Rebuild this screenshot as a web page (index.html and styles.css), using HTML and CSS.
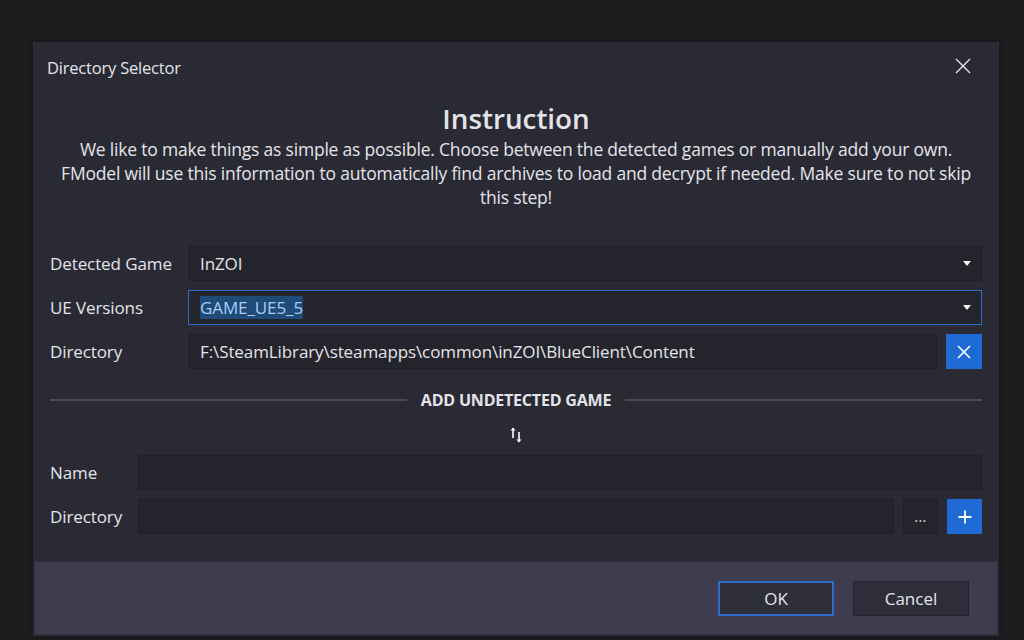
FILE: index.html
```html
<!DOCTYPE html>
<html lang="en">
<head>
  <meta charset="UTF-8" />
  <title>Directory Selector</title>
  <link rel="stylesheet" href="styles.css">
</head>
<body>
  <div class="window">
    <div class="titlebar">
      <span class="title">Directory Selector</span>
      <button class="close" aria-label="Close">
        <svg width="16" height="16" viewBox="0 0 16 16"><path d="M1 1 L15 15 M15 1 L1 15" stroke="#e6e6e6" stroke-width="1.4" fill="none"/></svg>
      </button>
    </div>

    <div class="content">
      <h1>Instruction</h1>
      <p class="intro">We like to make things as simple as possible. Choose between the detected games or manually add your own. FModel will use this information to automatically find archives to load and decrypt if needed. Make sure to not skip this step!</p>

      <div class="form top">
        <label>Detected Game</label>
        <div class="combo">
          <span>InZOI</span>
          <span class="caret"></span>
        </div>

        <label>UE Versions</label>
        <div class="combo focused">
          <span class="selected">GAME_UE5_5</span>
          <span class="caret"></span>
        </div>

        <label>Directory</label>
        <div class="field-row">
          <div class="field">F:\SteamLibrary\steamapps\common\inZOI\BlueClient\Content</div>
          <button class="icon-btn blue">
            <svg width="14" height="14" viewBox="0 0 14 14"><path d="M1 1 L13 13 M13 1 L1 13" stroke="#fff" stroke-width="1.6" fill="none"/></svg>
          </button>
        </div>
      </div>

      <div class="separator">
        <span class="line"></span>
        <span class="sep-text">ADD UNDETECTED GAME</span>
        <span class="line"></span>
      </div>

      <div class="swap">
        <svg width="14" height="18" viewBox="0 0 14 18">
          <path d="M4 2 L4 12" stroke="#fff" stroke-width="1.6"/>
          <path d="M1.5 4.5 L4 1.5 L6.5 4.5 Z" fill="#fff"/>
          <path d="M10 6 L10 16" stroke="#fff" stroke-width="1.6"/>
          <path d="M7.5 13.5 L10 16.5 L12.5 13.5 Z" fill="#fff"/>
        </svg>
      </div>

      <div class="form bottom">
        <label>Name</label>
        <div class="field"></div>

        <label>Directory</label>
        <div class="field-row">
          <div class="field"></div>
          <button class="icon-btn dots">...</button>
          <button class="icon-btn blue">
            <svg width="14" height="14" viewBox="0 0 14 14"><path d="M7 0.5 L7 13.5 M0.5 7 L13.5 7" stroke="#fff" stroke-width="1.8" fill="none"/></svg>
          </button>
        </div>
      </div>
    </div>

    <div class="footer">
      <button class="btn primary">OK</button>
      <button class="btn">Cancel</button>
    </div>
  </div>
</body>
</html>
```

FILE: styles.css
```css
* {
  box-sizing: border-box;
}

body {
  margin: 0;
  height: 640px;
  overflow: hidden;
  background: #1d1d1f;
  font-family: 'Open Sans', 'Noto Sans', sans-serif;
  color: #e4e4e8;
}

button {
  font-family: inherit;
  color: inherit;
}

.window {
  margin: 42px 0 0 33px;
  width: 966px;
  height: 594px;
  background: #2a2a35;
  border: 2px solid #2d2d37;
  border-top: 0;
  display: flex;
  flex-direction: column;
  box-shadow: 0 0 6px rgba(0, 0, 0, 0.4);
}

.titlebar {
  height: 50px;
  display: flex;
  align-items: center;
  justify-content: space-between;
  padding: 0 26px 0 12px;
}

.title {
  font-size: 16.5px;
  letter-spacing: -0.2px;
}

.close {
  background: none;
  border: none;
  padding: 0;
  width: 16px;
  height: 16px;
  display: flex;
  margin-top: -2px;
}

.content {
  flex: 1;
  padding: 0 15px;
}

h1 {
  margin: 7px 0 0;
  text-align: center;
  font-size: 27.8px;
  font-weight: 600;
  line-height: 38px;
}

.intro {
  margin: 0;
  padding: 0;
  text-align: center;
  font-size: 17.5px;
  line-height: 24px;
  letter-spacing: -0.2px;
}

.form {
  display: grid;
  align-items: center;
  row-gap: 9px;
}

.form.top {
  grid-template-columns: 138px 1fr;
  margin-top: 37px;
  row-gap: 9px;
}

.form.bottom {
  grid-template-columns: 88px 1fr;
  margin-top: 11px;
}

label {
  font-size: 17px;
  letter-spacing: -0.1px;
}

.combo, .field {
  height: 35px;
  background: #24242d;
  border: 1px solid #202028;
  display: flex;
  align-items: center;
  justify-content: space-between;
  padding: 0 11px;
  font-size: 17px;
  letter-spacing: -0.1px;
}

.combo.focused {
  border-color: #2e6ccc;
}

.selected {
  background: #1f4b79;
  color: #a9cdf3;
}

.caret {
  width: 0;
  height: 0;
  border-left: 4.5px solid transparent;
  border-right: 4.5px solid transparent;
  border-top: 5px solid #f2f2f2;
  margin-right: -1px;
}

.field-row {
  display: flex;
  gap: 9px;
}

.field-row .field {
  flex: 1;
}

.icon-btn {
  width: 36px;
  height: 35px;
  border: none;
  padding: 0;
  display: flex;
  align-items: center;
  justify-content: center;
  flex-shrink: 0;
}

.form.bottom .icon-btn {
  width: 35px;
}

.icon-btn.blue {
  background: #1f6ad4;
}

.icon-btn.dots {
  background: #24242d;
  border: 1px solid #202028;
  align-items: flex-end;
  padding-bottom: 7px;
  font-size: 14px;
  letter-spacing: 0.5px;
}

.separator {
  display: flex;
  align-items: center;
  gap: 14px;
  margin-top: 21px;
  height: 20px;
}

.line {
  flex: 1;
  height: 2px;
  background: #4a4a5a;
}

.sep-text {
  font-size: 16px;
  font-weight: 700;
  letter-spacing: -0.2px;
}

.swap {
  display: flex;
  justify-content: center;
  margin-top: 16px;
}

.footer {
  height: 72px;
  background: #3e3d4f;
  display: flex;
  align-items: center;
  justify-content: flex-end;
  gap: 19px;
  padding-right: 28px;
  flex-shrink: 0;
}

.btn {
  width: 116px;
  height: 35px;
  background: #2e2e3b;
  border: 1px solid #24242e;
  font-size: 17px;
}

.btn.primary {
  border: 2px solid #2e6ccc;
}
```
